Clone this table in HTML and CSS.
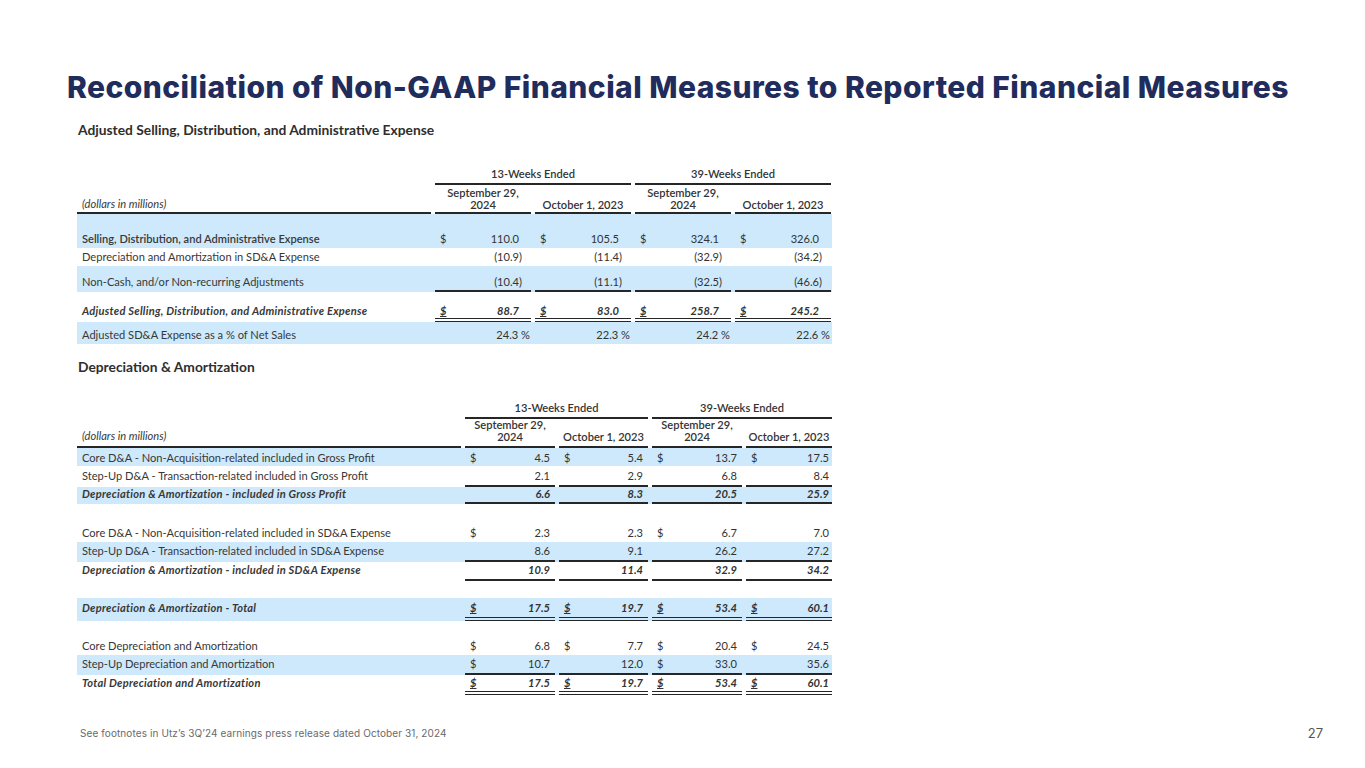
FILE: index.html
```html
<!DOCTYPE html>
<html lang="en">
<head>
<meta charset="utf-8">
<title>Reconciliation of Non-GAAP Financial Measures</title>
<link rel="stylesheet" href="styles.css">
</head>
<body>
<main class="slide">
  <h1 class="title">Reconciliation of Non-GAAP Financial Measures to Reported Financial Measures</h1>

  <section class="block block-a">
    <h2 class="section-title">Adjusted Selling, Distribution, and Administrative Expense</h2>
    <div class="fin fin-a">
      <div class="row h1">
        <div class="lab"></div>
        <div class="grp u">13-Weeks Ended</div>
        <div class="grp u">39-Weeks Ended</div>
      </div>
      <div class="row h2">
        <div class="lab it u">(dollars in millions)</div>
        <div class="hd u">September 29,<br>2024</div>
        <div class="hd u">October 1, 2023</div>
        <div class="hd u">September 29,<br>2024</div>
        <div class="hd u">October 1, 2023</div>
      </div>
      <div class="row blue ra1">
        <div class="lab semi">Selling, Distribution, and Administrative Expense</div>
        <div class="c"><span class="cur">$</span><span class="num">110.0</span></div>
        <div class="c"><span class="cur">$</span><span class="num">105.5</span></div>
        <div class="c"><span class="cur">$</span><span class="num">324.1</span></div>
        <div class="c"><span class="cur">$</span><span class="num">326.0</span></div>
      </div>
      <div class="row ra2">
        <div class="lab">Depreciation and Amortization in SD&amp;A Expense</div>
        <div class="c"><span class="num neg">(10.9)</span></div>
        <div class="c"><span class="num neg">(11.4)</span></div>
        <div class="c"><span class="num neg">(32.9)</span></div>
        <div class="c"><span class="num neg">(34.2)</span></div>
      </div>
      <div class="row blue ra3 line">
        <div class="lab">Non-Cash, and/or Non-recurring Adjustments</div>
        <div class="c u"><span class="num neg">(10.4)</span></div>
        <div class="c u"><span class="num neg">(11.1)</span></div>
        <div class="c u"><span class="num neg">(32.5)</span></div>
        <div class="c u"><span class="num neg">(46.6)</span></div>
      </div>
      <div class="row ra4 dbl bi">
        <div class="lab">Adjusted Selling, Distribution, and Administrative Expense</div>
        <div class="c u"><span class="cur ul">$</span><span class="num">88.7</span></div>
        <div class="c u"><span class="cur ul">$</span><span class="num">83.0</span></div>
        <div class="c u"><span class="cur ul">$</span><span class="num">258.7</span></div>
        <div class="c u"><span class="cur ul">$</span><span class="num">245.2</span></div>
      </div>
      <div class="row blue ra5">
        <div class="lab">Adjusted SD&amp;A Expense as a % of Net Sales</div>
        <div class="c"><span class="num pct">24.3 %</span></div>
        <div class="c"><span class="num pct">22.3 %</span></div>
        <div class="c"><span class="num pct">24.2 %</span></div>
        <div class="c"><span class="num pct">22.6 %</span></div>
      </div>
    </div>
  </section>

  <section class="block block-b">
    <h2 class="section-title">Depreciation &amp; Amortization</h2>
    <div class="fin fin-b">
      <div class="row h1">
        <div class="lab"></div>
        <div class="grp u">13-Weeks Ended</div>
        <div class="grp u">39-Weeks Ended</div>
      </div>
      <div class="row h2">
        <div class="lab it u">(dollars in millions)</div>
        <div class="hd u">September 29,<br>2024</div>
        <div class="hd u">October 1, 2023</div>
        <div class="hd u">September 29,<br>2024</div>
        <div class="hd u">October 1, 2023</div>
      </div>
      <div class="row blue rb1">
        <div class="lab">Core D&amp;A - Non-Acquisition-related included in Gross Profit</div>
        <div class="c"><span class="cur">$</span><span class="num">4.5</span></div>
        <div class="c"><span class="cur">$</span><span class="num">5.4</span></div>
        <div class="c"><span class="cur">$</span><span class="num">13.7</span></div>
        <div class="c"><span class="cur">$</span><span class="num">17.5</span></div>
      </div>
      <div class="row rb2 line">
        <div class="lab">Step-Up D&amp;A - Transaction-related included in Gross Profit</div>
        <div class="c u"><span class="num">2.1</span></div>
        <div class="c u"><span class="num">2.9</span></div>
        <div class="c u"><span class="num">6.8</span></div>
        <div class="c u"><span class="num">8.4</span></div>
      </div>
      <div class="row blue rb3 line bi">
        <div class="lab">Depreciation &amp; Amortization - included in Gross Profit</div>
        <div class="c u"><span class="num">6.6</span></div>
        <div class="c u"><span class="num">8.3</span></div>
        <div class="c u"><span class="num">20.5</span></div>
        <div class="c u"><span class="num">25.9</span></div>
      </div>
      <div class="row rb4">
        <div class="lab">Core D&amp;A - Non-Acquisition-related included in SD&amp;A Expense</div>
        <div class="c"><span class="cur">$</span><span class="num">2.3</span></div>
        <div class="c"><span class="num">2.3</span></div>
        <div class="c"><span class="cur">$</span><span class="num">6.7</span></div>
        <div class="c"><span class="num">7.0</span></div>
      </div>
      <div class="row blue rb5 line">
        <div class="lab">Step-Up D&amp;A - Transaction-related included in SD&amp;A Expense</div>
        <div class="c u"><span class="num">8.6</span></div>
        <div class="c u"><span class="num">9.1</span></div>
        <div class="c u"><span class="num">26.2</span></div>
        <div class="c u"><span class="num">27.2</span></div>
      </div>
      <div class="row rb6 line bi">
        <div class="lab">Depreciation &amp; Amortization - included in SD&amp;A Expense</div>
        <div class="c u"><span class="num">10.9</span></div>
        <div class="c u"><span class="num">11.4</span></div>
        <div class="c u"><span class="num">32.9</span></div>
        <div class="c u"><span class="num">34.2</span></div>
      </div>
      <div class="spacer"></div>
      <div class="row blue rb7 dbl bi">
        <div class="lab">Depreciation &amp; Amortization - Total</div>
        <div class="c u"><span class="cur ul">$</span><span class="num">17.5</span></div>
        <div class="c u"><span class="cur ul">$</span><span class="num">19.7</span></div>
        <div class="c u"><span class="cur ul">$</span><span class="num">53.4</span></div>
        <div class="c u"><span class="cur ul">$</span><span class="num">60.1</span></div>
      </div>
      <div class="row rb8">
        <div class="lab">Core Depreciation and Amortization</div>
        <div class="c"><span class="cur">$</span><span class="num">6.8</span></div>
        <div class="c"><span class="cur">$</span><span class="num">7.7</span></div>
        <div class="c"><span class="cur">$</span><span class="num">20.4</span></div>
        <div class="c"><span class="cur">$</span><span class="num">24.5</span></div>
      </div>
      <div class="row blue rb9 line">
        <div class="lab">Step-Up Depreciation and Amortization</div>
        <div class="c u"><span class="cur">$</span><span class="num">10.7</span></div>
        <div class="c u"><span class="num">12.0</span></div>
        <div class="c u"><span class="cur">$</span><span class="num">33.0</span></div>
        <div class="c u"><span class="num">35.6</span></div>
      </div>
      <div class="row rb10 dbl bi">
        <div class="lab">Total Depreciation and Amortization</div>
        <div class="c u"><span class="cur ul">$</span><span class="num">17.5</span></div>
        <div class="c u"><span class="cur ul">$</span><span class="num">19.7</span></div>
        <div class="c u"><span class="cur ul">$</span><span class="num">53.4</span></div>
        <div class="c u"><span class="cur ul">$</span><span class="num">60.1</span></div>
      </div>
    </div>
  </section>

  <footer class="foot">
    <span class="note">See footnotes in Utz’s 3Q’24 earnings press release dated October 31, 2024</span>
    <span class="page">27</span>
  </footer>
</main>
</body>
</html>
```
FILE: styles.css
```css
* { box-sizing: border-box; }
html, body { margin: 0; padding: 0; background: #fff; }
.slide {
  width: 1365px;
  height: 768px;
  display: flex;
  flex-direction: column;
  padding-top: 69px;
  overflow: hidden;
}
.title {
  margin: 0 0 0 67px;
  font-family: Inter, "Open Sans", sans-serif;
  font-weight: 800;
  font-size: 30px;
  line-height: 36px;
  letter-spacing: 0.45px;
  color: #1f2c5c;
  white-space: nowrap;
}
.block { margin-left: 77px; }
.section-title {
  margin: 0;
  font-family: Lato, "Open Sans", sans-serif;
  font-weight: 700;
  font-size: 13.8px;
  line-height: 16px;
  color: #2e2e2e;
  padding-left: 1px;
}
.block-a { margin-top: 17px; }
.block-a .section-title { margin-bottom: 27px; }
.block-b { margin-top: 15px; }
.block-b .section-title { margin-bottom: 24px; }

.fin {
  font-family: Lato, "Open Sans", sans-serif;
  font-size: 11.1px;
  color: #333;
}
.fin-a { width: 755px; }
.fin-b { width: 755px; }
.row {
  display: grid;
  column-gap: 4px;
  align-items: end;
  --bw: 0px;
  --bs: solid;
}
.fin-a .row { grid-template-columns: 354px repeat(4, 96px); }
.fin-b .row { grid-template-columns: 384px 90px 89px 90px 86px; }
.row > * {
  line-height: 14px;
  border-bottom: var(--bw) var(--bs) transparent;
  padding-bottom: var(--pb, 2px);
}
.row.line { --bw: 2px; }
.row.dbl { --bw: 4px; --bs: double; }
.row > .u { border-bottom-color: #262626; }
.row.blue { background: #cde9fb; }

.h1 > * { --pb: 2px; }
.h1 .grp { grid-column: span 2; border-bottom: 2px solid #262626; text-align: center; font-weight: 600; }
.h2 > * { border-bottom: 2px solid #262626; }
.h2 .hd { text-align: center; line-height: 12px; font-weight: 600; --pb: 1px; }
.fin-b .h2 .hd { --pb: 3px; }
.h2 .lab { --pb: 1px; }
.fin-b .h2 .lab { --pb: 3px; }
.fin-a .h1 { height: 20px; }
.fin-a .h2 { height: 29px; }
.fin-b .h1 { height: 20px; }
.fin-b .h2 { height: 29px; }

.lab { padding-left: 5px; white-space: nowrap; color: #383838; }
.lab.it { font-style: italic; }
.semi { font-weight: 600; }
.bi .lab, .bi .num, .bi .cur { font-weight: 700; font-style: italic; }
.bi .lab { letter-spacing: 0.25px; }

.c {
  display: flex;
  justify-content: space-between;
  padding-left: 5px;
  padding-right: 12px;
}
.c .num { margin-left: auto; }
.num.neg { margin-right: -3px; }
.num.pct { margin-right: -11px; }
.cur.ul { text-decoration: underline; }
.fin-b .c { padding-right: 5px; }
.fin-b .c:last-child { padding-right: 3px; }

.ra1 { height: 34px; }
.ra2 { height: 18px; }
.ra3 { height: 26px; --pb: 1px; }
.ra4 { height: 30px; --pb: 0px; }
.ra5 { height: 22px; }

.rb1 { height: 18px; --pb: 1px; }
.rb2 { height: 21px; }
.rb3 { height: 17px; --pb: 1px; }
.rb4 { height: 38px; }
.rb5 { height: 20px; }
.rb6 { height: 19px; }
.spacer { height: 17px; }
.rb7 { height: 23px; }
.rb8 { height: 34px; }
.rb9 { height: 20px; }
.rb10 { height: 20px; --pb: 1px; }

.foot {
  margin-top: auto;
  display: flex;
  justify-content: space-between;
  align-items: center;
  padding: 0 42px 27px 80px;
  font-family: Inter, "Open Sans", sans-serif;
  color: #6a6a6a;
}
.note { font-size: 10px; line-height: 14px; letter-spacing: 0.1px; }
.page { font-size: 13px; line-height: 16px; color: #555; }
```
